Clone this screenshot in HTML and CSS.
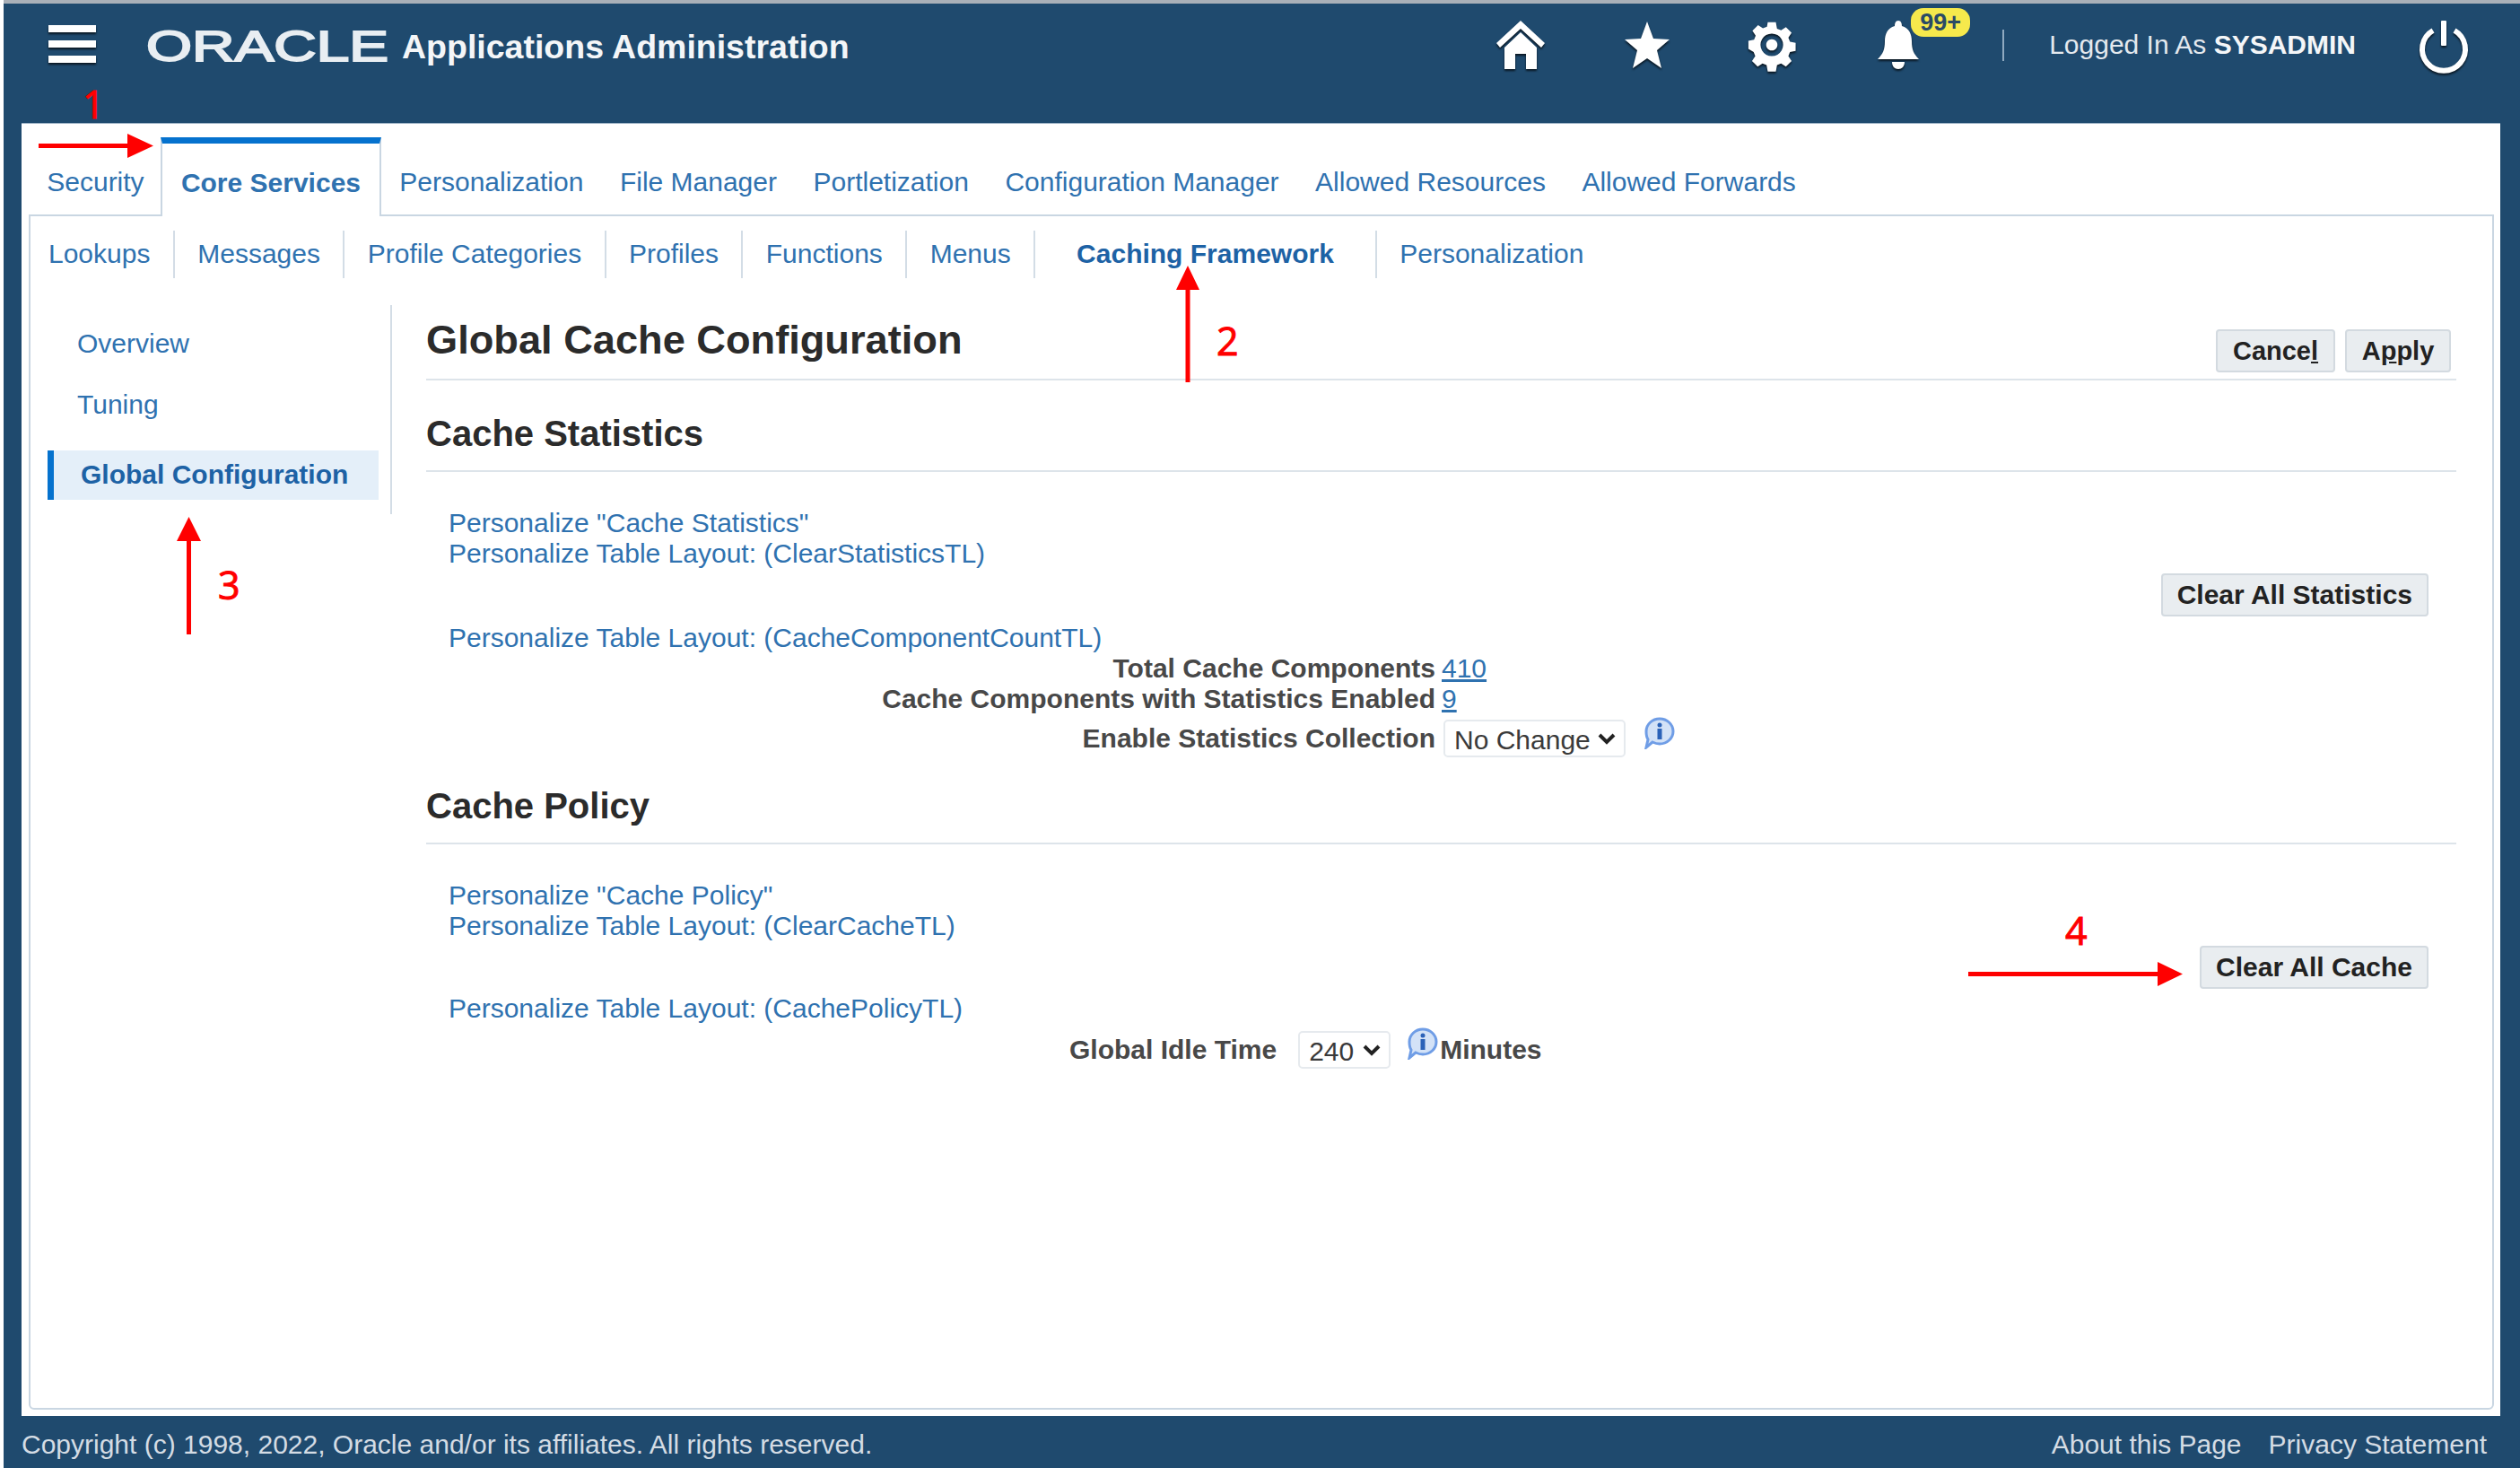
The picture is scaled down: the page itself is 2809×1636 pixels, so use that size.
FILE: index.html
```html
<!DOCTYPE html>
<html lang="en">
<head>
<meta charset="UTF-8">
<meta name="viewport" content="width=device-width, initial-scale=1.0">
<title>Global Cache Configuration</title>
<link rel="stylesheet" href="styles.css">
</head>
<body>

<div id="app">
    <header class="top-bar">
        <svg class="hamburger" viewBox="0 0 53 42"><rect y="0" width="53" height="8"/><rect y="17" width="53" height="8"/><rect y="34" width="53" height="8"/></svg>
        <span class="logo-box"><span class="logo">ORACLE</span></span>
        <span class="app-name">Applications Administration</span>
        <div class="top-icons">
            <svg class="top-icon" viewBox="0 0 54 54"><path d="M27 0 54 25 50 30 27 9 4 30 0 25zM9 30 27 13 45 30V54H33V37H21V54H9z"/></svg>
            <svg class="top-icon star" viewBox="0 0 50 54"><path d="M25 1 32 20 50 21 36 33 41 53 25 42 9 53 14 33 0 21 18 20z"/></svg>
            <svg class="top-icon gear" viewBox="-3 -3 60 60"><path fill-rule="evenodd" d="M22 -1h10l1.500 8 5 2 6-4 7 7-4 6 2 5 7 1.500v10l-7 1.500-2 5 4 6-7 7-6-4-5 2-1.500 8H22l-1.500-8-5-2-6 4-7-7 4-6-2-5L-2 32V22l7-1.500 2-5-4-6 7-7 6 4 5-2zM27 13a14 14 0 1 0 .01 0zM27 20a7 7 0 1 1-.01 0z"/></svg>
            <div class="bell-wrap">
                <svg class="top-icon bell" viewBox="0 0 46 54"><path d="M23 0c3 0 4 3 4 6 8 2 11 9 11 17 0 9 2 14 8 20H0c6-6 8-11 8-20C8 15 11 8 19 6c0-3 1-6 4-6zM16 46h14c0 5-3 8-7 8s-7-3-7-8z"/></svg>
                <span class="badge">99+</span>
            </div>
            <span class="top-sep"></span>
            <span class="logged-in">Logged In As <b>SYSADMIN</b></span>
            <svg class="top-icon power" viewBox="0 0 52 54"><path d="M14 11A24 24 0 1 0 38 11" fill="none" stroke="#fff" stroke-width="6"/><rect x="23" width="6" height="28" rx="1"/></svg>
        </div>
    </header>

    <div class="panel">
        <nav class="tabs">
            <a class="tab tab-first">Security</a>
            <a class="tab tab-on">Core Services</a>
            <a class="tab">Personalization</a>
            <a class="tab">File Manager</a>
            <a class="tab">Portletization</a>
            <a class="tab">Configuration Manager</a>
            <a class="tab">Allowed Resources</a>
            <a class="tab">Allowed Forwards</a>
        </nav>

        <div class="frame">
            <nav class="subtabs">
                <a class="subtab">Lookups</a>
                <a class="subtab">Messages</a>
                <a class="subtab">Profile Categories</a>
                <a class="subtab">Profiles</a>
                <a class="subtab">Functions</a>
                <a class="subtab">Menus</a>
                <a class="subtab subtab-on">Caching Framework</a>
                <a class="subtab">Personalization</a>
            </nav>

            <div class="columns">
                <aside class="side-nav">
                    <a class="side-link">Overview</a>
                    <a class="side-link">Tuning</a>
                    <a class="side-link side-on">Global Configuration</a>
                </aside>

                <main class="content">
                    <div class="title-row">
                        <h1>Global Cache Configuration</h1>
                        <div class="title-btns">
                            <button class="btn btn-cancel">Cance<u>l</u></button>
                            <button class="btn btn-apply">A<u>p</u>ply</button>
                        </div>
                    </div>

                    <h2 class="first-head">Cache Statistics</h2>
                    <section class="sec sec-stats">
                        <div class="sec-left">
                            <a class="plink">Personalize "Cache Statistics"</a>
                            <a class="plink">Personalize Table Layout: (ClearStatisticsTL)</a>
                            <a class="plink plink-gap">Personalize Table Layout: (CacheComponentCountTL)</a>
                            <div class="form-grid">
                                <span class="lbl">Total Cache Components</span>
                                <a class="val">410</a>
                                <span class="lbl">Cache Components with Statistics Enabled</span>
                                <a class="val">9</a>
                                <span class="lbl lbl-sel">Enable Statistics Collection</span>
                                <span class="val-sel">
                                    <span class="sel-wrap">
                                        <select class="sel sel-wide"><option>No Change</option></select>
                                        <svg class="chev" viewBox="0 0 20 14"><path d="M2 3 10 11 18 3" /></svg>
                                    </span>
                                    <svg class="info" viewBox="0 0 36 36"><path d="M18 2C26 2 33 8 33 16 33 24 26 30 18 30 15 30 12 29 10 28L3 34 5 25C3 22 3 19 3 16 3 8 10 2 18 2z" fill="#d3e2f7" stroke="#6f9de6" stroke-width="3"/><circle cx="18" cy="9" r="2.500" fill="#2b62b8"/><rect x="15.500" y="13" width="5" height="12" fill="#2b62b8"/></svg>
                                </span>
                            </div>
                        </div>
                        <button class="btn btn-side">Clear All Statistics</button>
                    </section>

                    <h2>Cache Policy</h2>
                    <section class="sec sec-policy">
                        <div class="sec-left">
                            <a class="plink">Personalize "Cache Policy"</a>
                            <a class="plink">Personalize Table Layout: (ClearCacheTL)</a>
                            <a class="plink plink-gap2">Personalize Table Layout: (CachePolicyTL)</a>
                            <div class="idle-row">
                                <span class="lbl">Global Idle Time</span>
                                <span class="sel-wrap sel-wrap-small">
                                    <select class="sel sel-small"><option>240</option></select>
                                    <svg class="chev" viewBox="0 0 20 14"><path d="M2 3 10 11 18 3" /></svg>
                                </span>
                                <svg class="info info-idle" viewBox="0 0 36 36"><path d="M18 2C26 2 33 8 33 16 33 24 26 30 18 30 15 30 12 29 10 28L3 34 5 25C3 22 3 19 3 16 3 8 10 2 18 2z" fill="#d3e2f7" stroke="#6f9de6" stroke-width="3"/><circle cx="18" cy="9" r="2.500" fill="#2b62b8"/><rect x="15.500" y="13" width="5" height="12" fill="#2b62b8"/></svg>
                                <span class="lbl">Minutes</span>
                            </div>
                        </div>
                        <button class="btn btn-side">Clear All Cache</button>
                    </section>
                </main>
            </div>
        </div>
    </div>

    <footer class="bottom-bar">
        <span>Copyright (c) 1998, 2022, Oracle and/or its affiliates. All rights reserved.</span>
        <span class="bottom-links"><a>About this Page</a><a>Privacy Statement</a></span>
    </footer>
</div>

<!-- red callouts drawn over the screenshot -->
<svg class="arrow arrow-1" viewBox="0 0 128 27"><path d="M0 11H99V0L128 13.500 99 27V16H0z"/></svg>
<svg class="arrow arrow-2" viewBox="0 0 26 130"><path d="M13 0 26 27H15.500V130H10.500V27H0z"/></svg>
<svg class="arrow arrow-3" viewBox="0 0 27 131"><path d="M13.500 0 27 27H16V131H11V27H0z"/></svg>
<svg class="arrow arrow-4" viewBox="0 0 239 27"><path d="M0 11H211V0L239 13.500 211 27V16H0z"/></svg>
<span class="callout callout-1">1</span>
<span class="callout callout-2">2</span>
<span class="callout callout-3">3</span>
<span class="callout callout-4">4</span>

</body>
</html>
```

FILE: styles.css
```css
* {
    box-sizing: border-box;
}
body {
    margin: 0;
    background-color: #fff;
    font-family: "Liberation Sans", Arial, sans-serif;
    color: #333;
}
#app {
    height: 1636px;
    margin-left: 4px;
    padding-top: 4px;
    background-color: #1f4a6e;
    display: flex;
    flex-direction: column;
    box-shadow: inset 0 4px 0 #a9b0b8;
}

/* top bar */
.top-bar {
    height: 133px;
    flex: none;
    display: flex;
    align-items: flex-start;
    color: #fff;
}
.hamburger {
    width: 53px;
    height: 42px;
    margin: 24px 0 0 50px;
    fill: #fff;
    filter: drop-shadow(0 2px 1px rgba(0,0,0,0.7));
}
.logo-box {
    width: 285px;
    margin-left: 56px;
    margin-top: 19px;
}
.logo {
    display: inline-block;
    font-size: 49px;
    line-height: 56px;
    color: #e9eef2;
    -webkit-text-stroke: 2px #e9eef2;
    transform: scaleX(1.34);
    transform-origin: left center;
}
.app-name {
    font-size: 37.5px;
    font-weight: bold;
    line-height: 44px;
    margin-top: 26px;
    color: #f4f6f8;
}
.top-icons {
    display: flex;
    align-items: center;
    margin-left: auto;
    padding-top: 19px;
    padding-right: 59px;
}
.top-icon {
    width: 54px;
    height: 54px;
    fill: #fff;
    overflow: visible;
    filter: drop-shadow(0 2px 1px rgba(0,0,0,0.7));
}
.star {
    width: 50px;
    margin-left: 89px;
}
.gear {
    width: 54px;
    margin-left: 87px;
}
.bell-wrap {
    position: relative;
    margin-left: 91px;
    width: 46px;
    height: 54px;
}
.bell {
    width: 46px;
}
.badge {
    position: absolute;
    left: 37px;
    top: -14px;
    width: 66px;
    height: 32px;
    border-radius: 14px;
    background-color: #f6e94c;
    color: #2a4a66;
    font-size: 27px;
    font-weight: bold;
    line-height: 32px;
    text-align: center;
}
.top-sep {
    width: 2px;
    height: 35px;
    margin-left: 93px;
    background-color: #8fa9c0;
}
.logged-in {
    margin-left: 50px;
    font-size: 30px;
    color: #e4e9ee;
}
.logged-in b {
    color: #f4f6f8;
}
.power {
    width: 52px;
    margin-left: 72px;
}

/* white panel */
.panel {
    flex: 1;
    margin: 0 22px 0 20px;
    background-color: #fff;
    padding: 0 7px 7px 8px;
    display: flex;
    flex-direction: column;
    border-top: 1px solid #9fb4c6;
}
.tabs {
    height: 101px;
    flex: none;
    display: flex;
    align-items: flex-end;
    position: relative;
    z-index: 1;
}
.tab {
    height: 73px;
    padding: 0 20.25px;
    font-size: 30px;
    line-height: 73px;
    color: #2f72b0;
}
.tab-first {
    margin-right: -2px;
}
.tab-on {
    height: 88px;
    margin-bottom: -2px;
    padding: 0 21px;
    background-color: #fff;
    border: 2px solid #c9d6e2;
    border-top: 7px solid #0572ce;
    border-bottom: 0;
    font-weight: bold;
    line-height: 87px;
}
.frame {
    flex: 1;
    border: 2px solid #c9d6e2;
    border-radius: 0 0 6px 6px;
    background-color: #fff;
}
.subtabs {
    display: flex;
    margin-top: 16px;
    padding-left: 20px;
}
.subtab {
    height: 53px;
    padding: 0 25.4px;
    font-size: 30px;
    line-height: 51px;
    color: #2f72b0;
    border-right: 2px solid #d3dde6;
}
.subtab:first-child {
    padding-left: 0;
}
.subtab:last-child {
    border-right: 0;
}
.subtab-on {
    padding: 0 46px;
    font-weight: bold;
    color: #1d62a5;
}
.columns {
    display: flex;
    align-items: flex-start;
    margin-top: 30px;
}

/* left side nav */
.side-nav {
    flex: none;
    width: 403px;
    height: 233px;
    padding: 26px 13px 0 19px;
    border-right: 2px solid #d3dde6;
}
.side-link {
    display: block;
    height: 34px;
    margin-bottom: 34px;
    padding-left: 33px;
    font-size: 30px;
    line-height: 34px;
    color: #2f72b0;
}
.side-on {
    height: 55px;
    margin-top: 4px;
    padding-left: 30px;
    background-color: #e4eff9;
    border-left: 7px solid #0572ce;
    font-weight: bold;
    line-height: 54px;
    color: #1d62a5;
}

/* main content */
.content {
    flex: none;
    width: 2263px;
    margin-left: 38px;
}
.title-row {
    height: 84px;
    display: flex;
    justify-content: space-between;
    border-bottom: 2px solid #dde4ea;
    padding-right: 6px;
}
h1 {
    margin: 11px 0 0;
    font-size: 45.2px;
    line-height: 56px;
    color: #2b2b2b;
}
.title-btns {
    display: flex;
    gap: 11px;
    padding-top: 27px;
}
.btn {
    height: 48px;
    padding: 0;
    background-color: #e9edf0;
    border: 2px solid #d3dae0;
    border-radius: 4px;
    font-family: inherit;
    font-size: 29px;
    font-weight: bold;
    color: #222;
}
.btn-cancel {
    width: 133px;
}
.btn-apply {
    width: 118px;
}
h2 {
    height: 66px;
    margin: 0;
    font-size: 40px;
    line-height: 46px;
    color: #2b2b2b;
    border-bottom: 2px solid #dde4ea;
}
.first-head {
    margin-top: 36px;
}
.sec {
    display: flex;
    justify-content: space-between;
    align-items: flex-start;
    padding: 40px 31px 0 25px;
}
.sec-stats {
    height: 349px;
}
.btn-side {
    margin-top: 73px;
    padding: 0 16px;
    font-size: 30px;
}
.plink {
    display: block;
    font-size: 30px;
    line-height: 34px;
    color: #2f72b0;
}
.plink-gap {
    margin-top: 60px;
}
.plink-gap2 {
    margin-top: 58px;
}
.form-grid {
    display: grid;
    grid-template-columns: 1100px auto;
    column-gap: 7px;
    align-items: center;
}
.lbl {
    font-size: 30px;
    font-weight: bold;
    line-height: 34px;
    color: #484848;
    text-align: right;
}
.lbl-sel {
    margin-top: 6px;
}
.val {
    font-size: 30px;
    line-height: 34px;
    color: #2f72b0;
    text-decoration: underline;
}
.val-sel {
    display: flex;
    align-items: center;
    gap: 20px;
    margin-top: 6px;
    padding-left: 2px;
}
.sel-wrap {
    position: relative;
    display: block;
    height: 42px;
}
.sel-wrap-small {
    margin-left: 24px;
}
.sel {
    height: 42px;
    padding: 2px 0 0 10px;
    background-color: #fff;
    border: 2px solid #e6eaee;
    border-radius: 5px;
    appearance: none;
    font-family: inherit;
    font-size: 30px;
    color: #3a3a3a;
}
.sel-wide {
    width: 203px;
}
.sel-small {
    width: 103px;
}
.chev {
    position: absolute;
    right: 11px;
    top: 14px;
    width: 20px;
    height: 14px;
    fill: none;
    stroke: #222;
    stroke-width: 4;
}
.info {
    width: 36px;
    height: 36px;
    margin-top: -12px;
}
.idle-row {
    display: flex;
    align-items: center;
    margin-top: 8px;
    margin-left: 692px;
}
.info-idle {
    margin-left: 18px;
    margin-right: 1px;
    margin-top: -14px;
}

/* footer */
.bottom-bar {
    height: 58px;
    flex: none;
    display: flex;
    justify-content: space-between;
    align-items: center;
    padding: 6px 37px 0 20px;
    font-size: 30px;
    color: #d4dce4;
}
.bottom-links a {
    margin-left: 30px;
}

/* callouts */
.arrow {
    position: absolute;
    fill: #f00;
}
.arrow-1 {
    left: 43px;
    top: 149px;
    width: 128px;
    height: 27px;
}
.arrow-2 {
    left: 1311px;
    top: 296px;
    width: 26px;
    height: 130px;
}
.arrow-3 {
    left: 197px;
    top: 576px;
    width: 27px;
    height: 131px;
}
.arrow-4 {
    left: 2194px;
    top: 1072px;
    width: 239px;
    height: 27px;
}
.callout {
    position: absolute;
    font-family: "Open Sans", sans-serif;
    font-size: 43px;
    line-height: 44px;
    color: #f00;
    -webkit-text-stroke: 1px #f00;
}
.callout-1 {
    left: 92px;
    top: 94px;
}
.callout-2 {
    left: 1356px;
    top: 358px;
}
.callout-3 {
    left: 243px;
    top: 630px;
}
.callout-4 {
    left: 2302px;
    top: 1015px;
}
```
